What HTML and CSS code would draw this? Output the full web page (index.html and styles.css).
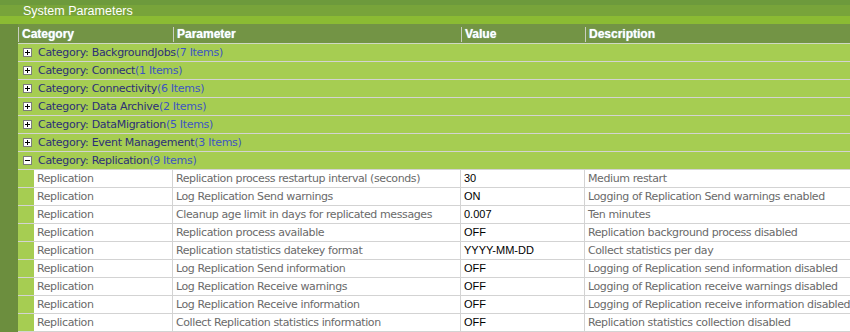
FILE: index.html
```html
<!DOCTYPE html>
<html lang="en">
<head>
  <meta charset="UTF-8">
  <title>System Parameters</title>
  <link rel="stylesheet" href="styles.css">
</head>
<body>
  <div class="panel">
    <div class="titlebar">System Parameters</div>

    <div class="grid">
      <div class="head">
        <div class="hc c-cat">Category</div>
        <div class="hc c-par">Parameter</div>
        <div class="hc c-val">Value</div>
        <div class="hc c-desc">Description</div>
      </div>

      <div class="group"><span class="tog plus"></span><span class="gname">Category:&nbsp;BackgroundJobs</span><span class="gcount">(7 Items)</span></div>
      <div class="group"><span class="tog plus"></span><span class="gname">Category:&nbsp;Connect</span><span class="gcount">(1 Items)</span></div>
      <div class="group"><span class="tog plus"></span><span class="gname">Category:&nbsp;Connectivity</span><span class="gcount">(6 Items)</span></div>
      <div class="group"><span class="tog plus"></span><span class="gname">Category:&nbsp;Data Archive</span><span class="gcount">(2 Items)</span></div>
      <div class="group"><span class="tog plus"></span><span class="gname">Category:&nbsp;DataMigration</span><span class="gcount">(5 Items)</span></div>
      <div class="group"><span class="tog plus"></span><span class="gname">Category:&nbsp;Event Management</span><span class="gcount">(3 Items)</span></div>
      <div class="group"><span class="tog minus"></span><span class="gname">Category:&nbsp;Replication</span><span class="gcount">(9 Items)</span></div>

      <div class="row">
        <div class="ind"></div>
        <div class="cell c-cat2">Replication</div>
        <div class="cell c-par">Replication process restartup interval (seconds)</div>
        <div class="cell c-val val">30</div>
        <div class="cell c-desc">Medium restart</div>
      </div>
      <div class="row">
        <div class="ind"></div>
        <div class="cell c-cat2">Replication</div>
        <div class="cell c-par">Log Replication Send warnings</div>
        <div class="cell c-val val">ON</div>
        <div class="cell c-desc">Logging of Replication Send warnings enabled</div>
      </div>
      <div class="row">
        <div class="ind"></div>
        <div class="cell c-cat2">Replication</div>
        <div class="cell c-par">Cleanup age limit in days for replicated messages</div>
        <div class="cell c-val val">0.007</div>
        <div class="cell c-desc">Ten minutes</div>
      </div>
      <div class="row">
        <div class="ind"></div>
        <div class="cell c-cat2">Replication</div>
        <div class="cell c-par">Replication process available</div>
        <div class="cell c-val val">OFF</div>
        <div class="cell c-desc">Replication background process disabled</div>
      </div>
      <div class="row">
        <div class="ind"></div>
        <div class="cell c-cat2">Replication</div>
        <div class="cell c-par">Replication statistics datekey format</div>
        <div class="cell c-val val">YYYY-MM-DD</div>
        <div class="cell c-desc">Collect statistics per day</div>
      </div>
      <div class="row">
        <div class="ind"></div>
        <div class="cell c-cat2">Replication</div>
        <div class="cell c-par">Log Replication Send information</div>
        <div class="cell c-val val">OFF</div>
        <div class="cell c-desc">Logging of Replication send information disabled</div>
      </div>
      <div class="row">
        <div class="ind"></div>
        <div class="cell c-cat2">Replication</div>
        <div class="cell c-par">Log Replication Receive warnings</div>
        <div class="cell c-val val">OFF</div>
        <div class="cell c-desc">Logging of Replication receive warnings disabled</div>
      </div>
      <div class="row">
        <div class="ind"></div>
        <div class="cell c-cat2">Replication</div>
        <div class="cell c-par">Log Replication Receive information</div>
        <div class="cell c-val val">OFF</div>
        <div class="cell c-desc">Logging of Replication receive information disabled</div>
      </div>
      <div class="row">
        <div class="ind"></div>
        <div class="cell c-cat2">Replication</div>
        <div class="cell c-par">Collect Replication statistics information</div>
        <div class="cell c-val val">OFF</div>
        <div class="cell c-desc">Replication statistics collection disabled</div>
      </div>
    </div>
  </div>
</body>
</html>
```

FILE: styles.css
```css
/* colours */
html {
  --olive-dark: #6c8e3e;
  --olive-head: #739445;
  --lime: #a6cd52;
  --line: #d3d3d3;
  --text-grey: #6a6a6a;
}

body {
  margin: 0;
  background: var(--olive-dark);
  font-family: "DejaVu Sans", Verdana, sans-serif;
  overflow: hidden;
}

.panel {
  width: 850px;
  height: 332px;
}

/* title bar */
.titlebar {
  height: 24px;
  box-sizing: border-box;
  padding: 4px 0 0 23px;
  color: #fff;
  font-family: "Liberation Sans", Arial, sans-serif;
  font-size: 12.5px;
  background: linear-gradient(to bottom, #6d9a3c 0, #6d9a3c 5px, #78a43a 5px, #78a43a 16px, #8bbb33 16px, #8bbb33 24px);
}

.grid {
  margin-left: 18px;
}

/* column header */
.head {
  display: flex;
  height: 19px;
  background: var(--olive-head);
  border-bottom: 1px solid #cfd8c4;
}

.hc {
  box-sizing: border-box;
  border-left: 1px solid #c9cfc0;
  height: 15px;
  margin-top: 3px;
  padding: 0 0 0 3px;
  line-height: 15px;
  color: #fff;
  font-family: "Liberation Sans", Arial, sans-serif;
  font-size: 12px;
  font-weight: bold;
  text-shadow: 0 0 1px #bfe8ff;
}

.c-cat { width: 155px; }
.c-cat2 { width: 139px; }
.c-par { width: 288px; }
.c-val { width: 124px; }
.c-desc { flex: 1; }

/* group rows */
.group {
  display: flex;
  align-items: center;
  height: 17px;
  background: var(--lime);
  border-bottom: 1px solid var(--line);
  font-size: 11px;
  color: #2c2f78;
  letter-spacing: -0.3px;
}

.tog {
  box-sizing: border-box;
  width: 9px;
  height: 9px;
  margin: 0 6px 0 5px;
  border: 1px solid #7c7c7c;
  background: #fff;
  position: relative;
}

.tog::before,
.tog.plus::after {
  content: "";
  position: absolute;
  background: #000;
}

.tog::before {
  left: 1px;
  top: 3px;
  width: 5px;
  height: 1px;
}

.tog.plus::after {
  left: 3px;
  top: 1px;
  width: 1px;
  height: 5px;
}

.gcount {
  color: #3d55c2;
}

/* data rows */
.row {
  display: flex;
  height: 17px;
  border-bottom: 1px solid var(--line);
  background: #fff;
}

.ind {
  width: 16px;
  background: var(--lime);
}

.cell {
  box-sizing: border-box;
  padding-left: 3px;
  line-height: 17px;
  font-size: 11px;
  color: var(--text-grey);
  white-space: nowrap;
  overflow: hidden;
  letter-spacing: -0.4px;
  border-right: 1px solid var(--line);
}

.cell.c-desc {
  border-right: none;
}

.val {
  color: #000;
  font-family: "Liberation Sans", Arial, sans-serif;
  letter-spacing: 0;
}
```
